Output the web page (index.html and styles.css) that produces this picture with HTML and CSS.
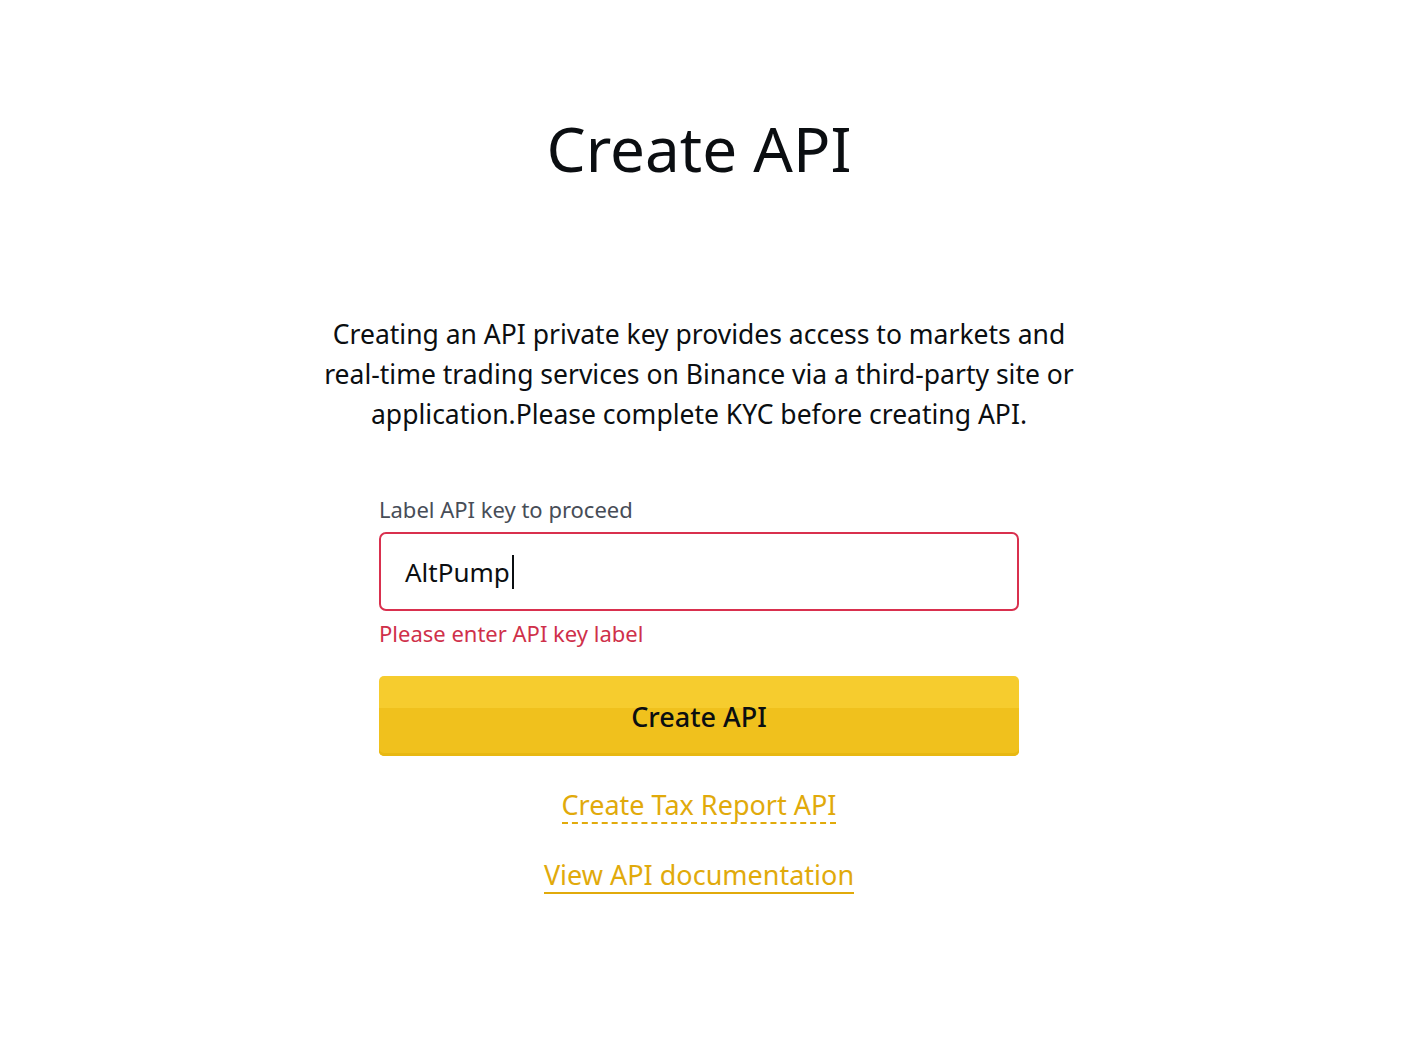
FILE: index.html
```html
<!DOCTYPE html>
<html lang="en">
<head>
    <meta charset="UTF-8">
    <meta name="viewport" content="width=device-width, initial-scale=1.0">
    <title>Create API</title>
    <link rel="stylesheet" href="styles.css">
</head>
<body>

<div class="page">
    <h1 class="title">Create API</h1>

    <p class="intro">Creating an API private key provides access to markets and real-time trading services on Binance via a third-party site or application.Please complete KYC before creating API.</p>

    <form class="api-form">
        <label class="field-label" for="apiLabel">Label API key to proceed</label>
        <div class="input-box">
            <span class="input-value">AltPump</span><span class="caret"></span>
        </div>
        <div class="field-error">Please enter API key label</div>

        <button type="button" class="btn-create">Create API</button>

        <div class="links">
            <a href="#" class="link-tax">Create Tax Report API</a>
            <a href="#" class="link-docs">View API documentation</a>
        </div>
    </form>
</div>

</body>
</html>
```

FILE: styles.css
```css
* {
    margin: 0;
    padding: 0;
    box-sizing: border-box;
}

body {
    background-color: #fff;
    font-family: 'Noto Sans', 'Open Sans', sans-serif;
    color: #1e2026;
}

.page {
    display: flex;
    flex-direction: column;
    align-items: center;
    padding: 106px 12px 0 0;
}

.title {
    font-size: 62px;
    font-weight: 400;
    line-height: 84px;
    color: #0b0e11;
}

.intro {
    width: 770px;
    margin-top: 124px;
    font-size: 26.5px;
    line-height: 40px;
    text-align: center;
    color: #0b0e11;
}

.api-form {
    width: 640px;
    margin-top: 60px;
}

.field-label {
    display: block;
    font-size: 22px;
    line-height: 30px;
    color: #474d57;
}

.input-box {
    display: flex;
    align-items: center;
    height: 79px;
    margin-top: 8px;
    padding: 0 24px;
    border: 2px solid #d9304e;
    border-radius: 7px;
    font-size: 26px;
    color: #0b0e11;
}

.caret {
    width: 2px;
    height: 34px;
    background-color: #0b0e11;
    margin-left: 2px;
}

.field-error {
    margin-top: 7px;
    font-size: 22px;
    line-height: 30px;
    color: #cf304a;
}

.btn-create {
    display: block;
    width: 100%;
    height: 80px;
    margin-top: 28px;
    border: none;
    border-radius: 5px;
    background: linear-gradient(#f6cc2e 0, #f6cc2e 40%, #f0c11d 40%, #f0c11d 100%);
    box-shadow: inset 0 -3px 0 #e8b812;
    font-family: inherit;
    font-size: 27px;
    font-weight: 500;
    color: #0b0e11;
    cursor: pointer;
}

.links {
    display: flex;
    flex-direction: column;
    align-items: center;
    gap: 34px;
    margin-top: 32px;
}

.links a {
    font-size: 27px;
    line-height: 34px;
    color: #e1aa0b;
    text-decoration: none;
}

.link-tax {
    border-bottom: 2px dashed #e1aa0b;
}

.link-docs {
    border-bottom: 2px solid #e1aa0b;
}
```
